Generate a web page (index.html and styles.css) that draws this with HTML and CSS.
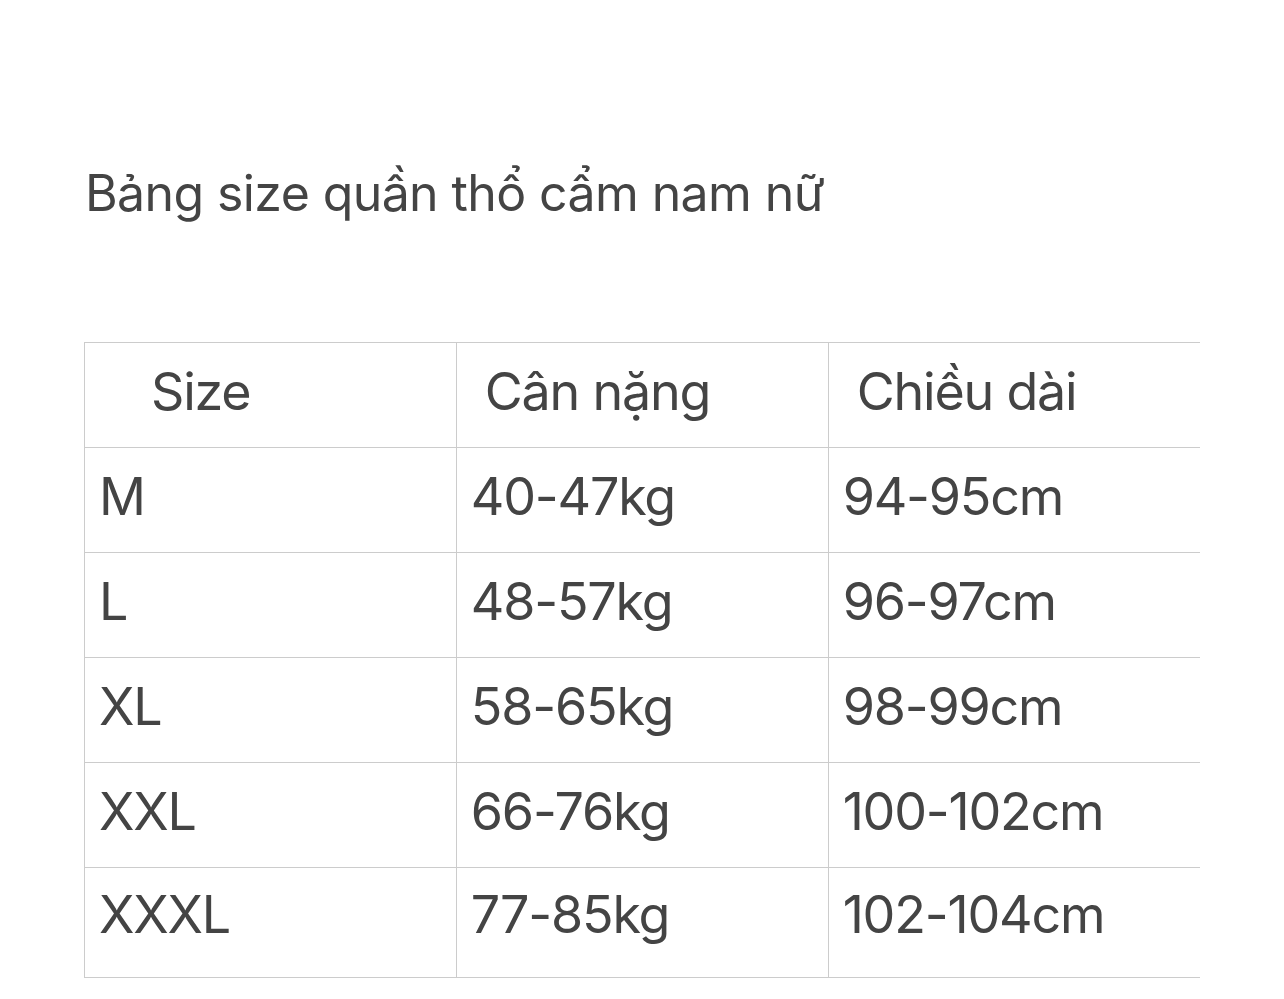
FILE: index.html
```html
<!DOCTYPE html>
<html lang="vi">
<head>
<meta charset="utf-8">
<title>Bảng size</title>
<link rel="stylesheet" href="styles.css">
</head>
<body>
<main class="page">
  <h1 class="title">Bảng size quần thổ cẩm nam nữ</h1>
  <table class="size-table">
    <thead>
      <tr>
        <th class="head head-size">Size</th>
        <th class="head">Cân nặng</th>
        <th class="head">Chiều dài</th>
      </tr>
    </thead>
    <tbody>
      <tr><td>M</td><td>40-47kg</td><td>94-95cm</td></tr>
      <tr><td>L</td><td>48-57kg</td><td>96-97cm</td></tr>
      <tr><td>XL</td><td>58-65kg</td><td>98-99cm</td></tr>
      <tr><td>XXL</td><td>66-76kg</td><td>100-102cm</td></tr>
      <tr class="last"><td>XXXL</td><td>77-85kg</td><td>102-104cm</td></tr>
    </tbody>
  </table>
</main>
</body>
</html>
```

FILE: styles.css
```css
html, body {
  margin: 0;
  padding: 0;
  background: #ffffff;
}
body {
  font-family: Inter, "Noto Sans", "Liberation Sans", sans-serif;
  color: #444444;
}
.page {
  padding: 160px 84px 0 84px;
}
.title {
  margin: 0 0 0 1px;
  font-size: 50px;
  font-weight: 400;
  line-height: 66px;
  letter-spacing: -0.6px;
}
.size-table {
  margin-top: 116px;
  width: 1116px;
  border-collapse: collapse;
  table-layout: fixed;
}
.size-table th,
.size-table td {
  height: 105px;
  padding: 0 0 6px 14px;
  border-left: 1px solid #cccccc;
  border-top: 1px solid #cccccc;
  border-bottom: 1px solid #cccccc;
  text-align: left;
  vertical-align: middle;
  font-size: 52px;
  font-weight: 400;
  line-height: 1;
  letter-spacing: -1.2px;
  box-sizing: border-box;
}
.size-table .head {
  padding-left: 28px;
}
.size-table .head-size {
  padding-left: 66px;
}
.size-table .last td {
  height: 110px;
  padding-bottom: 16px;
}
```
